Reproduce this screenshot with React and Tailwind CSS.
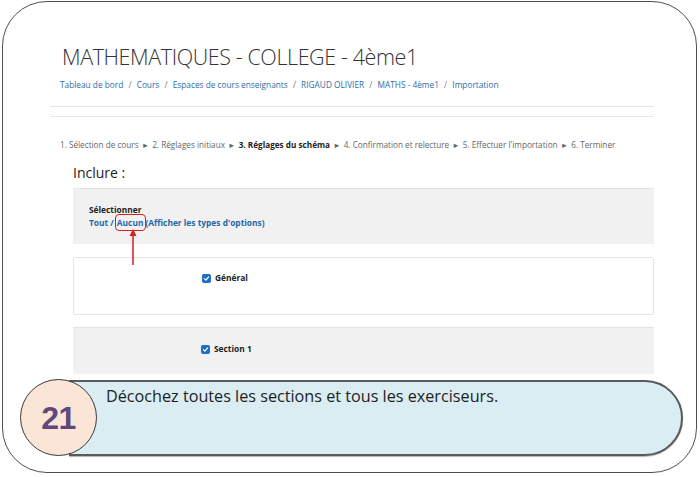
import React from "react";

function Check() {
  return (
    <span className="inline-flex w-[9px] h-[9px] rounded-[2px] bg-[#1c6fc2] items-center justify-center mr-[4px]">
      <svg width="7" height="7" viewBox="0 0 10 10">
        <path d="M2 5.2 L4.2 7.3 L8 2.8" fill="none" stroke="white" strokeWidth="1.8" strokeLinecap="round" strokeLinejoin="round" />
      </svg>
    </span>
  );
}

export default function App() {
  const arrow = <span className="text-[7.5px] leading-[14px] mx-[1px]">►</span>;
  return (
    <div className="w-[700px] h-[477px] bg-white pt-[1px] pl-[2px] pr-[3px] pb-[4px] font-['Open_Sans',sans-serif]">
      <div className="h-full rounded-[45px] border-[1.5px] border-[#4f4f4f] flex flex-col">
        <div className="h-[372px] overflow-hidden ml-[47px] mr-[42px]">
          <div className="mt-[41px] pl-[12px] text-[21.5px] leading-[28px] font-light text-[#333] tracking-[-0.4px]">
            MATHEMATIQUES - COLLEGE - 4ème1
          </div>
          <div className="mt-[7px] pl-[10px] text-[8.3px] leading-[14px] text-[#2d6da8]">
            Tableau de bord <span className="text-[#777] mx-[3px]">/</span> Cours <span className="text-[#777] mx-[3px]">/</span> Espaces de cours enseignants <span className="text-[#777] mx-[3px]">/</span> RIGAUD OLIVIER <span className="text-[#777] mx-[3px]">/</span> MATHS - 4ème1 <span className="text-[#777] mx-[3px]">/</span> Importation
          </div>
          <div className="mt-[14px] border-t border-[#e6e6e6]" />
          <div className="mt-[9px] border-t border-[#e6e6e6]" />
          <div className="mt-[21px] h-[14px] pl-[10px] text-[8.2px] leading-[14px] text-[#666] whitespace-nowrap">
            1. Sélection de cours {arrow} 2. Réglages initiaux {arrow} <b className="text-[#222]">3. Réglages du schéma</b> {arrow} 4. Confirmation et relecture {arrow} 5. Effectuer l'importation {arrow} 6. Terminer
          </div>
          <div className="ml-[23px]">
            <div className="mt-[11px] text-[14px] leading-[20px] text-[#222]">Inclure :</div>
            <div className="mt-[5px] h-[56px] bg-[#f1f1f1] border-t border-[#e4e4e4] pl-[16px] pt-[14px]">
              <div className="text-[8.4px] leading-[13px] font-bold text-[#222]">Sélectionner</div>
              <div className="text-[8.4px] leading-[13px] font-bold text-[#1f67a8] flex items-center">
                <span>Tout /</span>
                <span className="relative ml-[3px]">
                  Aucun
                  <span className="absolute -left-[2px] -right-[3px] -top-[2px] -bottom-[2px] border-[1.5px] border-[#d42020] rounded-[4px]" />
                  <span className="absolute left-[12px] top-[13px] flex flex-col items-center">
                    <svg width="8" height="36" viewBox="0 0 8 36">
                      <path d="M4 0 L7.5 7 L0.5 7 Z" fill="#d42020" />
                      <path d="M4 6 L4 36" stroke="#d42020" strokeWidth="1.5" />
                    </svg>
                  </span>
                </span>
                <span className="ml-[2px]">(Afficher les types d'options)</span>
              </div>
            </div>
            <div className="mt-[13px] h-[58px] bg-white border border-[#e4e4e4] rounded-[2px] pt-[13px] pl-[128px]">
              <div className="flex items-center text-[8.4px] leading-[14px] font-bold text-[#222]"><Check />Général</div>
            </div>
            <div className="mt-[12px] h-[60px] bg-[#f1f1f1] border-t border-[#e4e4e4] pt-[14px] pl-[128px]">
              <div className="flex items-center text-[8.4px] leading-[14px] font-bold text-[#222]"><Check />Section 1</div>
            </div>
          </div>
        </div>
        <div className="mt-[5px] ml-[17px] mr-[13px] flex items-center">
          <div className="relative z-10 w-[77px] h-[77px] shrink-0 rounded-full bg-[#fbe5d6] border border-[#3a3a3a] flex items-center justify-center">
            <span className="text-[32px] font-bold text-[#5f497a] font-['Liberation_Sans',sans-serif] tracking-[-0.5px]">21</span>
          </div>
          <div className="-ml-[28px] flex-1 h-[76px] bg-[#daedf3] border-2 border-[#5a5a5a] rounded-r-[38px] pl-[35px] pt-[4px] shadow-[0_1px_1px_rgba(0,0,0,0.3)]">
            <div className="text-[16.2px] leading-[20px] text-[#1e1e1e]">Décochez toutes les sections et tous les exerciseurs.</div>
          </div>
        </div>
      </div>
    </div>
  );
}
